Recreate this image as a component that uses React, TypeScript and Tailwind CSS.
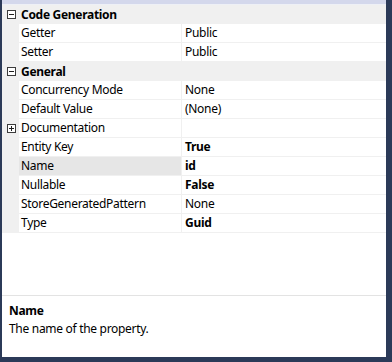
import React from "react";

type Row =
  | { kind: "cat"; label: string; open: boolean }
  | { kind: "prop"; label: string; value: string; bold?: boolean; expand?: boolean; selected?: boolean };

const rows: Row[] = [
  { kind: "cat", label: "Code Generation", open: true },
  { kind: "prop", label: "Getter", value: "Public" },
  { kind: "prop", label: "Setter", value: "Public" },
  { kind: "cat", label: "General", open: true },
  { kind: "prop", label: "Concurrency Mode", value: "None" },
  { kind: "prop", label: "Default Value", value: "(None)" },
  { kind: "prop", label: "Documentation", value: "", expand: true },
  { kind: "prop", label: "Entity Key", value: "True", bold: true },
  { kind: "prop", label: "Name", value: "id", bold: true, selected: true },
  { kind: "prop", label: "Nullable", value: "False", bold: true },
  { kind: "prop", label: "StoreGeneratedPattern", value: "None" },
  { kind: "prop", label: "Type", value: "Guid", bold: true },
];

function Toggle({ open }: { open: boolean }) {
  return (
    <svg width="9" height="9" viewBox="0 0 9 9" className="shrink-0">
      <rect x="0.5" y="0.5" width="8" height="8" fill="#fff" stroke="#3c3c3c" />
      <path d="M2 4.5h5" stroke="#1e1e1e" />
      {!open && <path d="M4.5 2v5" stroke="#1e1e1e" />}
    </svg>
  );
}

export default function App() {
  return (
    <div
      className="w-[392px] h-[362px] bg-[#2b3a58] flex flex-col pl-[2px] pr-[6px] pb-[5px] text-[12px] tracking-[-0.3px] text-black"
      style={{ fontFamily: '"Segoe UI", "Noto Sans", sans-serif' }}
    >
      <div className="flex-1 flex flex-col bg-white">
        <div className="h-[4px] bg-[#d4d8ec] shrink-0" />
        <div className="h-[1px] bg-[#eef0f6] shrink-0" />

        {/* property grid */}
        <div className="flex flex-col">
          {rows.map((r, i) =>
            r.kind === "cat" ? (
              <div key={i} className="h-[19px] flex items-center bg-[#f0f0f0]">
                <div className="w-[17px] flex justify-center pl-[1px]">
                  <Toggle open={r.open} />
                </div>
                <span className="pl-[2px] font-bold leading-none">{r.label}</span>
              </div>
            ) : (
              <div key={i} className="h-[19px] flex bg-[#f0f0f0]">
                <div className="w-[17px] flex items-center justify-center pl-[1px]">
                  {r.expand && <Toggle open={false} />}
                </div>
                <div
                  className={
                    "w-[162px] flex items-center pl-[2px] border-b border-[#f0f0f0] " +
                    (r.selected ? "bg-[#e6e6e6]" : "bg-white")
                  }
                >
                  <span className="leading-none">{r.label}</span>
                </div>
                <div className="w-[1px] bg-[#f0f0f0]" />
                <div className="flex-1 flex items-center pl-[3px] bg-white border-b border-[#f0f0f0]">
                  <span className={"leading-none " + (r.bold ? "font-bold" : "")}>{r.value}</span>
                </div>
              </div>
            )
          )}
        </div>

        <div className="h-[62px] shrink-0" />
        <div className="h-[1px] bg-[#e3e3e3] shrink-0" />

        {/* description pane */}
        <div className="flex flex-col pl-[7px] pt-[6px]">
          <div className="font-bold leading-[18px]">Name</div>
          <div className="leading-[18px]">The name of the property.</div>
        </div>
      </div>
    </div>
  );
}
